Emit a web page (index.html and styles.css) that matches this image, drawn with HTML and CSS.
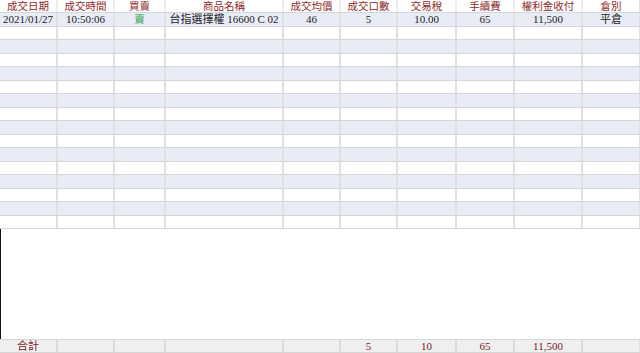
FILE: index.html
```html
<!DOCTYPE html>
<html lang="zh-Hant">
<head>
<meta charset="utf-8">
<title>成交明細</title>
<link rel="stylesheet" href="styles.css">
</head>
<body>
<div class="sheet">
  <div class="row head">
    <div class="c">成交日期</div>
    <div class="c">成交時間</div>
    <div class="c">買賣</div>
    <div class="c">商品名稱</div>
    <div class="c">成交均價</div>
    <div class="c">成交口數</div>
    <div class="c">交易稅</div>
    <div class="c">手續費</div>
    <div class="c">權利金收付</div>
    <div class="c">倉別</div>
  </div>
  <div class="body">
    <div class="row odd">
      <div class="c">2021/01/27</div>
      <div class="c">10:50:06</div>
      <div class="c sell">賣</div>
      <div class="c">台指選擇權 16600 C 02</div>
      <div class="c">46</div>
      <div class="c">5</div>
      <div class="c">10.00</div>
      <div class="c">65</div>
      <div class="c">11,500</div>
      <div class="c">平倉</div>
    </div>
    <div class="row even"><div class="c"></div><div class="c"></div><div class="c"></div><div class="c"></div><div class="c"></div><div class="c"></div><div class="c"></div><div class="c"></div><div class="c"></div><div class="c"></div></div>
    <div class="row odd"><div class="c"></div><div class="c"></div><div class="c"></div><div class="c"></div><div class="c"></div><div class="c"></div><div class="c"></div><div class="c"></div><div class="c"></div><div class="c"></div></div>
    <div class="row even"><div class="c"></div><div class="c"></div><div class="c"></div><div class="c"></div><div class="c"></div><div class="c"></div><div class="c"></div><div class="c"></div><div class="c"></div><div class="c"></div></div>
    <div class="row odd"><div class="c"></div><div class="c"></div><div class="c"></div><div class="c"></div><div class="c"></div><div class="c"></div><div class="c"></div><div class="c"></div><div class="c"></div><div class="c"></div></div>
    <div class="row even"><div class="c"></div><div class="c"></div><div class="c"></div><div class="c"></div><div class="c"></div><div class="c"></div><div class="c"></div><div class="c"></div><div class="c"></div><div class="c"></div></div>
    <div class="row odd"><div class="c"></div><div class="c"></div><div class="c"></div><div class="c"></div><div class="c"></div><div class="c"></div><div class="c"></div><div class="c"></div><div class="c"></div><div class="c"></div></div>
    <div class="row even"><div class="c"></div><div class="c"></div><div class="c"></div><div class="c"></div><div class="c"></div><div class="c"></div><div class="c"></div><div class="c"></div><div class="c"></div><div class="c"></div></div>
    <div class="row odd"><div class="c"></div><div class="c"></div><div class="c"></div><div class="c"></div><div class="c"></div><div class="c"></div><div class="c"></div><div class="c"></div><div class="c"></div><div class="c"></div></div>
    <div class="row even"><div class="c"></div><div class="c"></div><div class="c"></div><div class="c"></div><div class="c"></div><div class="c"></div><div class="c"></div><div class="c"></div><div class="c"></div><div class="c"></div></div>
    <div class="row odd"><div class="c"></div><div class="c"></div><div class="c"></div><div class="c"></div><div class="c"></div><div class="c"></div><div class="c"></div><div class="c"></div><div class="c"></div><div class="c"></div></div>
    <div class="row even"><div class="c"></div><div class="c"></div><div class="c"></div><div class="c"></div><div class="c"></div><div class="c"></div><div class="c"></div><div class="c"></div><div class="c"></div><div class="c"></div></div>
    <div class="row odd"><div class="c"></div><div class="c"></div><div class="c"></div><div class="c"></div><div class="c"></div><div class="c"></div><div class="c"></div><div class="c"></div><div class="c"></div><div class="c"></div></div>
    <div class="row even"><div class="c"></div><div class="c"></div><div class="c"></div><div class="c"></div><div class="c"></div><div class="c"></div><div class="c"></div><div class="c"></div><div class="c"></div><div class="c"></div></div>
    <div class="row odd"><div class="c"></div><div class="c"></div><div class="c"></div><div class="c"></div><div class="c"></div><div class="c"></div><div class="c"></div><div class="c"></div><div class="c"></div><div class="c"></div></div>
    <div class="row even"><div class="c"></div><div class="c"></div><div class="c"></div><div class="c"></div><div class="c"></div><div class="c"></div><div class="c"></div><div class="c"></div><div class="c"></div><div class="c"></div></div>
  </div>
  <div class="filler"></div>
  <div class="row foot">
    <div class="c">合計</div>
    <div class="c"></div>
    <div class="c"></div>
    <div class="c"></div>
    <div class="c"></div>
    <div class="c">5</div>
    <div class="c">10</div>
    <div class="c">65</div>
    <div class="c">11,500</div>
    <div class="c"></div>
  </div>
</div>
</body>
</html>
```
FILE: styles.css
```css
html, body {
  margin: 0;
  padding: 0;
  background: #ffffff;
}
.sheet {
  width: 640px;
  height: 353px;
  display: flex;
  flex-direction: column;
  font-family: "Liberation Serif", "Noto Sans CJK TC", serif;
  font-size: 11px;
  color: #222222;
  overflow: hidden;
}
.row {
  display: grid;
  grid-template-columns: 58px 57px 51px 118px 57px 57px 59px 58px 68px 57px;
  box-sizing: border-box;
  border-bottom: 1px solid #d6d6d6;
}
.c {
  box-sizing: border-box;
  border-right: 2px solid #e0e0e0;
  text-align: center;
  white-space: nowrap;
  overflow: hidden;
}
.row .c:last-child {
  border-right: 1px solid #e0e0e0;
}
.head {
  height: 13px;
  background: #ffffff;
  color: #8e2a2a;
  font-size: 10.5px;
  line-height: 13px;
}
.head .c {
  border-right-color: #ececec;
}
.body .row {
  height: 13.5px;
  line-height: 13px;
}
.odd {
  background: #e8ecf7;
}
.even {
  background: #ffffff;
}
.sell {
  color: #2fa84a;
  font-size: 10.5px;
}
.filler {
  flex: 1;
  border-left: 1.5px solid #111111;
}
.foot {
  height: 14px;
  background: #efefef;
  border-top: 1px solid #d6d6d6;
  color: #7a1c1c;
  line-height: 13px;
}
.foot .c {
  border-right-color: #dadada;
}
```
